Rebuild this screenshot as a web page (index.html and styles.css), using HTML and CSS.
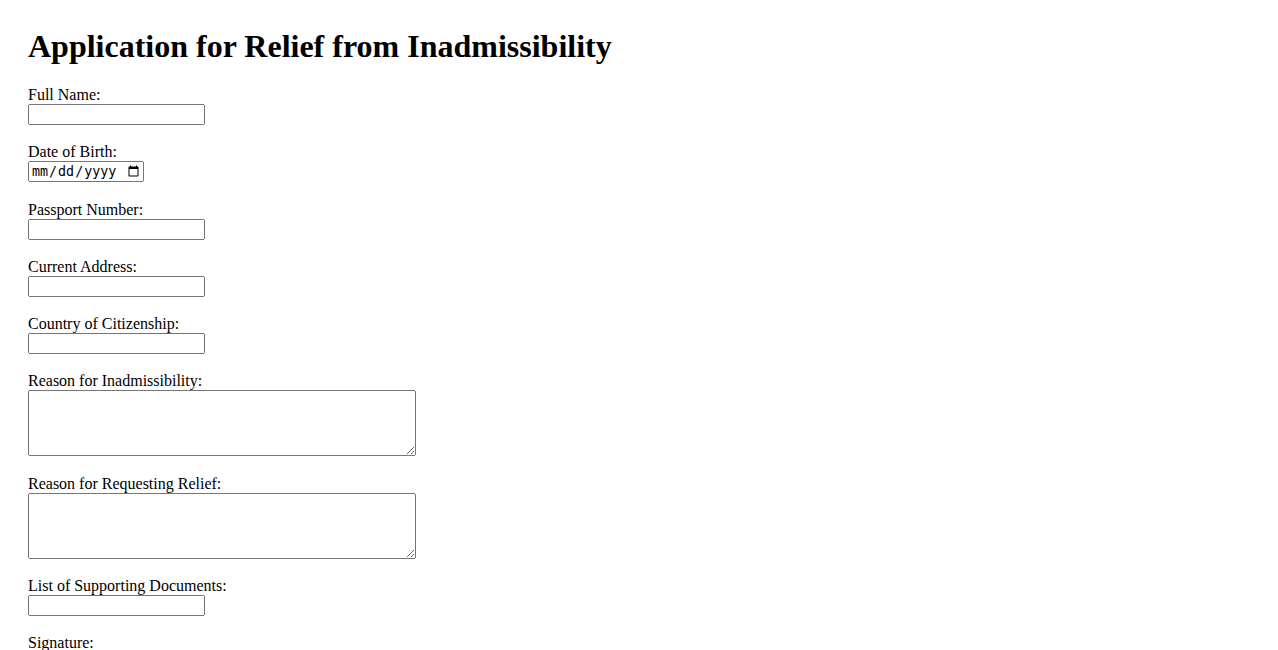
FILE: index.html
```html
<!DOCTYPE html>
<html lang="en">
<head>
<meta charset="utf-8">
<title>Application for Relief from Inadmissibility</title>
<link rel="stylesheet" href="styles.css">
</head>
<body>
<h1 class="title">Application for Relief from Inadmissibility</h1>
<form class="form">
  <div class="field">
    <label class="label" for="name">Full Name:</label>
    <input class="text" type="text" id="name">
  </div>
  <div class="field">
    <label class="label" for="dob">Date of Birth:</label>
    <input class="date" type="date" id="dob">
  </div>
  <div class="field">
    <label class="label" for="passport">Passport Number:</label>
    <input class="text" type="text" id="passport">
  </div>
  <div class="field">
    <label class="label" for="address">Current Address:</label>
    <input class="text" type="text" id="address">
  </div>
  <div class="field">
    <label class="label" for="country">Country of Citizenship:</label>
    <input class="text" type="text" id="country">
  </div>
  <div class="field">
    <label class="label" for="reason">Reason for Inadmissibility:</label>
    <textarea class="area" id="reason" rows="4" cols="50"></textarea>
  </div>
  <div class="field">
    <label class="label" for="relief">Reason for Requesting Relief:</label>
    <textarea class="area" id="relief" rows="4" cols="50"></textarea>
  </div>
  <div class="field">
    <label class="label" for="docs">List of Supporting Documents:</label>
    <input class="text" type="text" id="docs">
  </div>
  <div class="field">
    <label class="label" for="sig">Signature:</label>
    <input class="text" type="text" id="sig">
  </div>
</form>
</body>
</html>
```

FILE: styles.css
```css
html, body {
  background: #ffffff;
}
body {
  margin: 28px;
  font-family: "Liberation Serif", "Times New Roman", serif;
  font-size: 16px;
  color: #000000;
}
.title {
  font-size: 32px;
  font-weight: bold;
  margin: 0 0 21px;
}
.field {
  margin-bottom: 18.25px;
}
.label {
  display: block;
}
.text {
  width: 177px;
  height: 21px;
  box-sizing: border-box;
  margin: 0;
}
.date {
  width: 116px;
  height: 21px;
  box-sizing: border-box;
  margin: 0;
}
.area {
  width: 388px;
  height: 66px;
  box-sizing: border-box;
  margin: 0;
  display: block;
}
```
